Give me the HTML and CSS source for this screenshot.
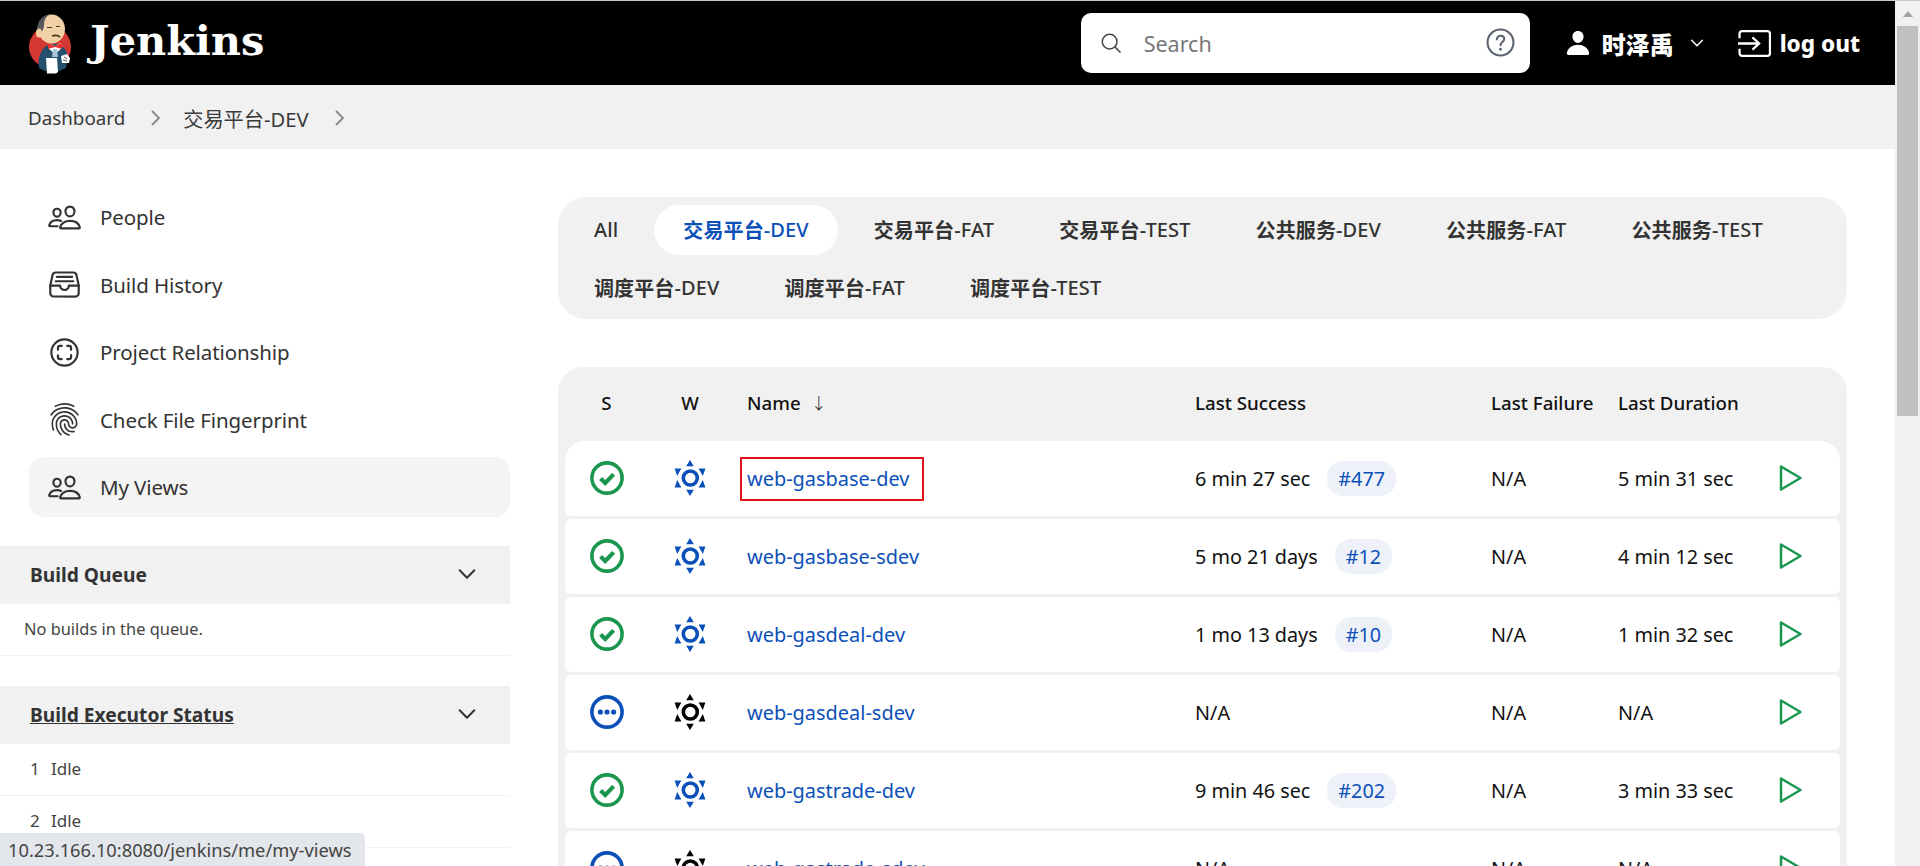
FILE: index.html
```html
<!DOCTYPE html>
<html lang="en">
<head>
<meta charset="utf-8">
<title>交易平台-DEV - Jenkins</title>
<link rel="stylesheet" href="styles.css">
</head>
<body>
<svg class="defs" aria-hidden="true">
  <symbol id="i-people" viewBox="0 0 512 512"><g fill="none" stroke="currentColor" stroke-width="32" stroke-linecap="round" stroke-linejoin="round"><path d="M402 168c-2.93 40.67-33.1 72-66 72s-63.12-31.32-66-72c-3-42.31 26.37-72 66-72s69 30.46 66 72z"/><path d="M336 304c-65.17 0-127.84 32.37-143.54 95.41-2.08 8.34 3.15 16.59 11.72 16.59h263.65c8.57 0 13.77-8.25 11.72-16.59C463.85 335.36 401.18 304 336 304z"/><path d="M200 185.94c-2.34 32.48-26.72 58.06-53 58.06s-50.7-25.57-53-58.06C91.61 152.15 115.34 128 147 128s55.39 24.77 53 57.94z"/><path d="M206 306c-18.05-8.27-37.93-11.45-59-11.45-52 0-102.1 25.85-114.65 76.2-1.65 6.66 2.53 13.25 9.37 13.25H154"/></g></symbol>
  <symbol id="i-tray" viewBox="0 0 512 512"><g fill="none" stroke="currentColor" stroke-width="32" stroke-linecap="round" stroke-linejoin="round"><path d="M384 80H128c-26 0-43 14-48 40L48 272v112a48.14 48.14 0 0048 48h320a48.14 48.14 0 0048-48V272l-32-152c-5-27-23-40-48-40z"/><path d="M48 272h144M320 272h144M192 272a64 64 0 00128 0M144 144h224M128 208h256"/></g></symbol>
  <symbol id="i-scan" viewBox="0 0 512 512"><g fill="none" stroke="currentColor" stroke-width="32" stroke-linecap="round" stroke-linejoin="round"><path d="M448 256c0-106-86-192-192-192S64 150 64 256s86 192 192 192 192-86 192-192z"/><path d="M296.06 160H320a32.09 32.09 0 0132 32v25.57M215.94 352H192a32.09 32.09 0 01-32-32v-23.9M352 294.12V320a32.09 32.09 0 01-32 32h-23.94M160 215.92V192a32.09 32.09 0 0132-32h24"/></g></symbol>
  <symbol id="i-finger" viewBox="0 0 512 512"><path fill="currentColor" d="M390.42 75.28a10.45 10.45 0 01-5.32-1.44C340.72 50.08 302.35 40 256.35 40c-45.77 0-89.23 11.28-128.76 33.84C122 77 115.11 74.8 111.87 69a12.4 12.4 0 014.63-16.32A281.81 281.81 0 01256.35 16c49.23 0 92.23 11.28 139.39 36.48a12 12 0 014.85 16.08 11.3 11.3 0 01-10.17 6.72zm-330.79 126a11.73 11.73 0 01-6.7-2.16 12.26 12.26 0 01-2.78-16.8c22.89-33.6 52-60 86.69-78.48 72.58-38.84 165.51-39.12 238.32-.24 34.68 18.48 63.8 44.64 86.69 78a12.29 12.29 0 01-2.78 16.8 11.26 11.26 0 01-16.18-2.88c-20.8-30.24-47.15-54-78.36-70.56-66.34-35.28-151.18-35.28-217.29.24-31.44 16.8-57.79 40.8-78.59 71a10 10 0 01-9.02 4.56zM204.1 491a10.66 10.66 0 01-8.09-3.6C175.9 466.48 165 453 149.55 424c-16-29.52-24.27-65.52-24.27-104.16 0-71.28 58.71-129.36 130.84-129.36S387 248.56 387 319.84a11.56 11.56 0 11-23.11 0c0-58.08-48.32-105.36-107.72-105.36S148.4 261.76 148.4 319.84c0 34.56 7.39 66.48 21.49 92.4 14.8 27.6 25 39.36 42.77 58.08a12.67 12.67 0 010 17 12.44 12.44 0 01-8.56 3.68zm165.75-44.4c-27.51 0-51.78-7.2-71.66-21.36a123.82 123.82 0 01-52.47-101.76 11.56 11.56 0 1123.11 0 99.39 99.39 0 0042.05 81.6c16.44 11.76 35.71 17.28 58.97 17.28a151.18 151.18 0 0024-2.4c6.24-1.2 12.25 3.12 13.4 9.84a11.74 11.74 0 01-9.47 13.92 141.85 141.85 0 01-27.93 2.88zM323.38 496a13 13 0 01-3-.48c-36.76-10.56-60.8-24.72-86-50.4-32.37-33.36-50.16-77.76-50.16-125.28 0-38.88 31.9-70.56 71.19-70.56s71.2 31.68 71.2 70.56c0 25.68 21.5 46.56 48.08 46.56s48.08-20.88 48.08-46.56c0-90.48-75.13-163.92-167.59-163.92-65.65 0-125.75 37.92-152.79 96.72-9 19.44-13.64 42.24-13.64 67.2 0 18.72 1.61 48.24 15.48 86.64 2.32 6.24-.69 13.2-6.7 15.36a11.34 11.34 0 01-14.79-7 276.39 276.39 0 01-16.88-95c0-28.8 5.32-55 15.72-77.76 30.75-67 98.94-110.4 173.6-110.4 105.18 0 190.71 84.24 190.71 187.92 0 38.88-31.9 70.56-71.2 70.56s-71.2-31.68-71.2-70.56c.01-25.68-21.49-46.56-48.07-46.56s-48.08 20.88-48.08 46.56c0 41 15.26 79.44 43.23 108.24 22 22.56 43 35 75.59 44.4 6.24 1.68 9.71 8.4 8.09 14.64a11.39 11.39 0 01-10.87 9.16z"/></symbol>
  <symbol id="i-chev" viewBox="0 0 24 24"><path d="M4 8l8 8 8-8" fill="none" stroke="currentColor" stroke-width="2.2" stroke-linecap="round" stroke-linejoin="round"/></symbol>
  <symbol id="i-crumb" viewBox="0 0 10 18"><path d="M2 2l7 7-7 7" fill="none" stroke="currentColor" stroke-width="1.8"/></symbol>
  <symbol id="i-ok" viewBox="0 0 34 34"><circle cx="17" cy="17" r="15.1" fill="none" stroke="currentColor" stroke-width="3.6"/><path d="M10.6 17.6l4.6 4.4 8.4-8.6" fill="none" stroke="currentColor" stroke-width="4.2"/></symbol>
  <symbol id="i-none" viewBox="0 0 34 34"><circle cx="17" cy="17" r="15.1" fill="none" stroke="currentColor" stroke-width="3.6"/><circle cx="10.4" cy="17" r="2.6" fill="currentColor"/><circle cx="17" cy="17" r="2.6" fill="currentColor"/><circle cx="23.6" cy="17" r="2.6" fill="currentColor"/></symbol>
  <symbol id="i-sun" viewBox="-16 -18 32 36"><circle cx="0.3" cy="0" r="7" fill="none" stroke="currentColor" stroke-width="3.6"/><path fill="currentColor" d="M0-18l3.8 6.2h-7.6zM0 18l3.8-6.2h-7.6zM-15.4-9.4h6.8l-4.2 7.4zM15.4-9.4H8.6l4.2 7.4zM-15.4 9.4h6.8l-4.2-7.4zM15.4 9.4H8.6l4.2-7.4z"/></symbol>
  <symbol id="i-play" viewBox="0 0 24 28"><path d="M2 2.5l19.5 11.5L2 25.500z" fill="none" stroke="currentColor" stroke-width="2.5" stroke-linejoin="round"/></symbol>
</svg>

<div class="page">
  <header class="topbar">
    <a class="brand">
      <svg class="butler" viewBox="0 0 44 60" aria-hidden="true">
        <circle cx="22" cy="33" r="21" fill="#d33833"/>
        <path d="M11 54c-2-12 3-21 11-24h7c6 2 10 6 11 12l-2 12-9 4-12-1z" fill="#24506e"/>
        <ellipse cx="23.500" cy="15" rx="13.500" ry="14.500" fill="#f0d0a4"/>
        <path d="M10 20C7 10 13 1 22 .5c-5 2-6 7-6 11 0 3-2 5-3 9z" fill="#55565a"/>
        <ellipse cx="11" cy="19" rx="3" ry="4.500" fill="#f0d0a4"/>
        <path d="M24 22c3-1 6-1 8 1" fill="none" stroke="#49361f" stroke-width="1.800"/>
        <path d="M19 13.500h5M28 12.500h4" stroke="#49361f" stroke-width="1.200"/>
        <path d="M20 29l7 3 6-3 1 5-7 6-7-6z" fill="#fff"/>
        <path d="M20 29l7 3 7-3v6l-7-2-7 2z" fill="#e2342d"/>
        <path d="M25 35h4l1 8h-6z" fill="#a6c7d9"/>
        <path d="M18 44h11l1 14-2 1.500h-9z" fill="#fff"/>
        <path d="M33 42l6-2 3 4-1 5-7 0z" fill="#fff"/>
        <path d="M36 43l3 2M35 46l4 1" stroke="#49484a" stroke-width=".9"/>
      </svg>
      <span class="wordmark">Jenkins</span>
    </a>
    <div class="search">
      <svg class="search-ico" viewBox="0 0 24 24" aria-hidden="true"><circle cx="10.500" cy="10.500" r="8" fill="none" stroke="currentColor" stroke-width="1.600"/><path d="M16.500 16.500L22 22" stroke="currentColor" stroke-width="1.600" stroke-linecap="round"/></svg>
      <span class="search-text">Search</span>
      <svg class="help-ico" viewBox="0 0 28 28" aria-hidden="true"><circle cx="14" cy="14" r="12.500" fill="none" stroke="currentColor" stroke-width="2"/><path d="M10.500 11c.2-2.200 1.600-3.500 3.600-3.500s3.500 1.300 3.500 3.100c0 2.800-3.600 3-3.600 6" fill="none" stroke="currentColor" stroke-width="2" stroke-linecap="round"/><circle cx="14" cy="20.500" r="1.400" fill="currentColor"/></svg>
    </div>
    <div class="user">
      <svg class="user-ico" viewBox="48 32 416 448" aria-hidden="true"><path fill="currentColor" d="M332.64 64.58C313.18 43.57 286 32 256 32c-30.16 0-57.43 11.5-76.8 32.38-19.58 21.11-29.12 49.8-26.88 80.78C156.76 206.28 203.27 256 256 256s99.16-49.71 103.67-110.82c2.27-30.7-7.33-59.33-27.03-80.6zM432 480H80a31 31 0 01-24.2-11.13c-6.5-7.77-9.12-18.38-7.18-29.11C57.06 392.94 83.4 353.61 124.8 326c36.78-24.51 83.37-38 131.2-38s94.42 13.5 131.2 38c41.4 27.6 67.74 66.93 76.18 113.75 1.94 10.73-.68 21.34-7.18 29.11A31 31 0 01432 480z"/></svg>
      <span class="user-name">时泽禹</span>
      <svg class="user-chev"><use href="#i-chev"/></svg>
    </div>
    <a class="logout">
      <svg class="logout-ico" viewBox="0 0 32 26" aria-hidden="true"><path d="M1.500 8V3.500a2.500 2.500 0 012.500-2.500h24.500a2.500 2.500 0 012.500 2.500v19a2.500 2.500 0 01-2.500 2.500H4a2.500 2.500 0 01-2.500-2.500V18" fill="none" stroke="currentColor" stroke-width="2.200"/><path d="M0 13h20M14 7l6.500 6-6.500 6" fill="none" stroke="currentColor" stroke-width="2.200"/></svg>
      <span>log out</span>
    </a>
  </header>

  <nav class="crumbs">
    <a>Dashboard</a>
    <svg class="crumb-sep"><use href="#i-crumb"/></svg>
    <a class="crumb-view">交易平台-DEV</a>
    <svg class="crumb-sep"><use href="#i-crumb"/></svg>
  </nav>

  <div class="layout">
    <aside class="side">
      <ul class="tasks">
        <li class="task"><svg class="task-ico"><use href="#i-people"/></svg>People</li>
        <li class="task"><svg class="task-ico"><use href="#i-tray"/></svg>Build History</li>
        <li class="task"><svg class="task-ico"><use href="#i-scan"/></svg>Project Relationship</li>
        <li class="task"><svg class="task-ico"><use href="#i-finger"/></svg>Check File Fingerprint</li>
        <li class="task task-on"><svg class="task-ico"><use href="#i-people"/></svg>My Views</li>
      </ul>
      <section class="panel">
        <h2 class="panel-head"><span>Build Queue</span><svg class="panel-chev"><use href="#i-chev"/></svg></h2>
        <p class="panel-empty">No builds in the queue.</p>
      </section>
      <section class="panel panel-exec">
        <h2 class="panel-head"><u>Build Executor Status</u><svg class="panel-chev"><use href="#i-chev"/></svg></h2>
        <div class="exec"><span class="exec-n">1</span>Idle</div>
        <div class="exec"><span class="exec-n">2</span>Idle</div>
      </section>
    </aside>

    <main class="main">
      <div class="tabs">
        <a class="tab">All</a>
        <a class="tab tab-on"><b>交易平台</b>-DEV</a>
        <a class="tab"><b>交易平台</b>-FAT</a>
        <a class="tab"><b>交易平台</b>-TEST</a>
        <a class="tab"><b>公共服务</b>-DEV</a>
        <a class="tab"><b>公共服务</b>-FAT</a>
        <a class="tab"><b>公共服务</b>-TEST</a>
        <a class="tab"><b>调度平台</b>-DEV</a>
        <a class="tab"><b>调度平台</b>-FAT</a>
        <a class="tab"><b>调度平台</b>-TEST</a>
      </div>

      <div class="jobs">
        <div class="grid head">
          <span class="mid">S</span><span class="mid">W</span>
          <span class="cell">Name<i class="sort">↓</i></span>
          <span class="cell">Last Success</span><span class="cell">Last Failure</span><span class="cell">Last Duration</span><span></span>
        </div>

        <div class="grid row row-first">
          <svg class="st ok"><use href="#i-ok"/></svg><svg class="wx blue"><use href="#i-sun"/></svg>
          <span class="cell"><a class="job marked">web-gasbase-dev</a></span>
          <span class="cell">6 min 27 sec<a class="bn">#477</a></span><span class="cell">N/A</span><span class="cell">5 min 31 sec</span>
          <svg class="play"><use href="#i-play"/></svg>
        </div>
        <div class="grid row">
          <svg class="st ok"><use href="#i-ok"/></svg><svg class="wx blue"><use href="#i-sun"/></svg>
          <span class="cell"><a class="job">web-gasbase-sdev</a></span>
          <span class="cell">5 mo 21 days<a class="bn">#12</a></span><span class="cell">N/A</span><span class="cell">4 min 12 sec</span>
          <svg class="play"><use href="#i-play"/></svg>
        </div>
        <div class="grid row">
          <svg class="st ok"><use href="#i-ok"/></svg><svg class="wx blue"><use href="#i-sun"/></svg>
          <span class="cell"><a class="job">web-gasdeal-dev</a></span>
          <span class="cell">1 mo 13 days<a class="bn">#10</a></span><span class="cell">N/A</span><span class="cell">1 min 32 sec</span>
          <svg class="play"><use href="#i-play"/></svg>
        </div>
        <div class="grid row">
          <svg class="st none"><use href="#i-none"/></svg><svg class="wx black"><use href="#i-sun"/></svg>
          <span class="cell"><a class="job">web-gasdeal-sdev</a></span>
          <span class="cell">N/A</span><span class="cell">N/A</span><span class="cell">N/A</span>
          <svg class="play"><use href="#i-play"/></svg>
        </div>
        <div class="grid row">
          <svg class="st ok"><use href="#i-ok"/></svg><svg class="wx blue"><use href="#i-sun"/></svg>
          <span class="cell"><a class="job">web-gastrade-dev</a></span>
          <span class="cell">9 min 46 sec<a class="bn">#202</a></span><span class="cell">N/A</span><span class="cell">3 min 33 sec</span>
          <svg class="play"><use href="#i-play"/></svg>
        </div>
        <div class="grid row">
          <svg class="st none"><use href="#i-none"/></svg><svg class="wx black"><use href="#i-sun"/></svg>
          <span class="cell"><a class="job">web-gastrade-sdev</a></span>
          <span class="cell">N/A</span><span class="cell">N/A</span><span class="cell">N/A</span>
          <svg class="play"><use href="#i-play"/></svg>
        </div>
      </div>
    </main>
  </div>
</div>

<div class="scrollbar"><span class="sb-up"></span><span class="sb-thumb"></span></div>
<div class="status-url">10.23.166.10:8080/jenkins/me/my-views</div>
</body>
</html>
```
FILE: styles.css
```css
* { box-sizing: border-box; }
html, body { height: 100%; margin: 0; overflow: hidden; }
body {
  display: flex;
  background: #fff;
  color: #333;
  font-family: "Noto Sans", "Noto Sans CJK SC", sans-serif;
  font-size: 19.5px;
  border-top: 1px solid #c8c8c8;
}
.defs { display: none; }
a { color: inherit; text-decoration: none; }
ul { list-style: none; margin: 0; padding: 0; }
h2, p { margin: 0; }

.page { flex: 1; min-width: 0; height: 865px; overflow: hidden; }

/* header */
.topbar {
  height: 84px;
  background: #000;
  color: #fff;
  display: flex;
  align-items: center;
  padding: 0 35px 0 28px;
}
.brand { display: flex; align-items: center; gap: 18px; margin-right: auto; }
.butler { width: 44px; height: 60px; margin-top: 1px; }
.wordmark {
  font-family: "DejaVu Serif", serif;
  font-weight: 700;
  font-size: 41.5px;
  letter-spacing: 0;
  line-height: 1;
  padding-bottom: 4px;
}
.search {
  width: 449px;
  height: 60px;
  margin-top: -1px;
  background: #fff;
  border-radius: 10px;
  display: flex;
  align-items: center;
  padding: 0 15px 0 19px;
  color: #555;
}
.search-ico { width: 22px; height: 22px; margin-right: 22px; color: #444; }
.search-text { flex: 1; font-size: 21.5px; color: #777; padding-top: 2px; }
.help-ico { width: 29px; height: 29px; color: #5b6270; }
.user {
  display: flex;
  align-items: center;
  margin-left: 36px;
  font-weight: 900;
  font-size: 24px;
}
.user-ico { width: 24px; height: 24px; margin-right: 12px; }
.user-name { margin-right: 15px; }
.user-chev { width: 16px; height: 16px; }
.logout {
  display: flex;
  align-items: center;
  gap: 9px;
  margin-left: 33px;
  font-weight: 800;
  font-size: 22.5px;
}
.logout-ico { width: 33px; height: 27px; }

/* breadcrumbs */
.crumbs {
  height: 64px;
  background: #f1f1f1;
  display: flex;
  align-items: center;
  padding: 2px 0 0 28px;
  font-size: 18.8px;
  color: #3a3a3a;
}
.crumb-view { font-size: 20.2px; }
.crumb-sep { width: 10px; height: 18px; color: #888; margin: 0 23px 0 25px; }

/* layout */
.layout { display: flex; align-items: flex-start; }

/* sidebar */
.side { width: 510px; flex: none; padding-top: 38px; }
.tasks { display: flex; flex-direction: column; gap: 7.500px; padding-left: 29px; margin-bottom: 29px; }
.task {
  height: 60px;
  display: flex;
  align-items: center;
  gap: 18px;
  padding-left: 18px;
  border-radius: 15px;
  font-size: 20.5px;
  letter-spacing: -.1px;
}
.task-on { background: #f4f4f4; }
.task-ico { width: 35px; height: 35px; flex: none; color: #333; }
.panel-head {
  height: 58px;
  background: #f1f1f1;
  display: flex;
  align-items: center;
  justify-content: space-between;
  padding: 0 32px 2px 30px;
  font-size: 19.2px;
  font-weight: 700;
  color: #333;
}
.panel-chev { width: 22px; height: 22px; margin-top: -1px; color: #333; }
.panel-empty {
  height: 52px;
  padding: 13px 0 0 24px;
  font-size: 16.400px;
  color: #444;
  border-bottom: 1px solid #f1f1f1;
}
.panel-exec { margin-top: 30px; }
.exec {
  height: 52px;
  display: flex;
  align-items: center;
  padding: 0 0 2px 30px;
  font-size: 17px;
  color: #444;
  border-bottom: 1px solid #f1f1f1;
}
.exec-n { width: 21px; }

/* tabs */
.main { flex: 1; min-width: 0; padding: 48px 48px 0 48px; }
.tabs {
  background: #f1f1f1;
  border-radius: 28px;
  display: flex;
  flex-wrap: wrap;
  gap: 8px 7px;
  padding: 8px 7px 6px;
  margin-bottom: 48px;
}
.tab {
  height: 50px;
  display: flex;
  align-items: center;
  padding: 0 29px 2px;
  border-radius: 25px;
  font-size: 20px;
  letter-spacing: .12px;
  color: #333;
  font-weight: 500;
}
.tab b { font-weight: 700; }
.tab-on { background: #fff; color: #0b50b8; }

/* job table */
.jobs {
  background: #f1f1f1;
  border-radius: 25px 25px 0 0;
  padding: 0 7px;
  display: flex;
  flex-direction: column;
  gap: 3px;
}
.grid {
  display: grid;
  grid-template-columns: 83px 84px 448px 296px 127px 147px 90px;
  align-items: center;
}
.head { height: 74px; font-size: 18.7px; font-weight: 500; color: #111; margin-bottom: -3px; padding-bottom: 4px; }
.mid { text-align: center; }
.cell { padding-left: 15px; display: flex; align-items: center; white-space: nowrap; }
.sort { font-style: normal; font-weight: 300; font-size: 16px; margin-left: 10px; }
.row {
  height: 75px;
  background: #fff;
  border-radius: 6px;
  font-size: 19.8px;
  color: #111;
}
.row-first { border-radius: 20px 20px 6px 6px; }
.st { width: 34px; height: 34px; justify-self: center; margin-bottom: 1px; }
.ok { color: #1a964f; }
.none { color: #0b50b8; }
.wx { width: 32px; height: 36px; justify-self: center; margin-bottom: 1px; }
.blue { color: #0b50b8; }
.black { color: #000; }
.job { color: #0b50b8; position: relative; font-size: 19.95px; }
.marked::after {
  content: "";
  box-sizing: border-box;
  position: absolute;
  left: -7px;
  top: -8px;
  width: 184px;
  height: 44px;
  border: 2px solid #e0131c;
}
.bn {
  margin-left: 17px;
  height: 35px;
  display: flex;
  align-items: center;
  padding: 0 11px;
  border-radius: 16px;
  background: #eef2f8;
  color: #0b50b8;
}
.play { width: 24px; height: 28px; color: #1a964f; margin: 0 0 1px 29px; }

/* scrollbar */
.scrollbar {
  width: 25px;
  flex: none;
  height: 865px;
  background: #f1f1f1;
  position: relative;
  padding: 0 2px;
}
.sb-up {
  display: block;
  width: 0;
  height: 0;
  margin: 10px auto 9px;
  border: 5px solid transparent;
  border-top: 0;
  border-bottom: 6px solid #a3a3a3;
}
.sb-thumb { display: block; height: 390px; background: #c1c1c1; }

/* link tooltip */
.status-url {
  position: fixed;
  left: 0;
  bottom: 0;
  width: 365px;
  height: 33px;
  padding: 4px 0 0 8px;
  background: #e3e6ea;
  border-radius: 0 5px 0 0;
  font-size: 18.3px;
  line-height: 26px;
  color: #444;
  white-space: nowrap;
}
```
